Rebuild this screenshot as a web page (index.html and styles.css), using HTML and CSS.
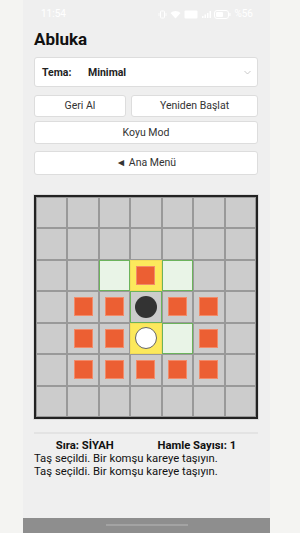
FILE: index.html
```html
<!DOCTYPE html>
<html lang="tr">
  <head>
    <meta charset="UTF-8" />
    <meta name="viewport" content="width=device-width, initial-scale=1.0" />
    <title>Abluka</title>
    <link rel="stylesheet" href="styles.css">
  </head>
  <body>
    <div class="phone">
      <div class="status">
        <span class="time">11:54</span>
        <div class="status-icons">
          <svg width="9" height="9" viewBox="0 0 9 9"><rect x="2.5" y="1" width="4" height="7" rx="0.8" fill="none" stroke="#fff" stroke-width="1"/><path d="M1 3v3M8 3v3" stroke="#fff" stroke-width="0.8"/></svg>
          <svg width="11" height="9" viewBox="0 0 11 9"><path d="M0.5 3a7 7 0 0 1 10 0L5.5 8.5z" fill="#fff"/></svg>
          <svg width="14" height="9" viewBox="0 0 14 9"><rect x="0.5" y="0.5" width="13" height="8" rx="1" fill="#fff"/></svg>
          <svg width="10" height="9" viewBox="0 0 10 9"><path d="M1 8h1.5V6H1zM3.5 8H5V4.5H3.5zM6 8h1.5V3H6zM8.5 8H10V1H8.5z" fill="#fff"/></svg>
          <svg width="17" height="9" viewBox="0 0 17 9"><rect x="0.5" y="0.5" width="14" height="8" rx="2.5" fill="none" stroke="#fff" stroke-width="1"/><rect x="2" y="2" width="7" height="5" rx="1" fill="#fff"/><rect x="15.3" y="3" width="1.2" height="3" fill="#fff"/></svg>
          <span>%56</span>
        </div>
      </div>

      <h1 class="title">Abluka</h1>

      <div class="select">
        <span class="select-label">Tema:</span>
        <span class="select-value">Minimal</span>
        <svg class="chevron" width="7" height="5" viewBox="0 0 7 5"><path d="M0.5 1l3 3 3-3" fill="none" stroke="#bbb" stroke-width="0.8"/></svg>
      </div>

      <div class="btn-row">
        <button class="btn">Geri Al</button>
        <button class="btn">Yeniden Başlat</button>
      </div>
      <button class="btn btn-wide">Koyu Mod</button>
      <button class="btn btn-wide btn-menu">◄ Ana Menü</button>

      <div class="board" id="board"></div>

      <div class="info">
        <div class="info-top">
          <span>Sıra: SİYAH</span>
          <span>Hamle Sayısı: 1</span>
        </div>
        <p>Taş seçildi. Bir komşu kareye taşıyın.</p>
        <p>Taş seçildi. Bir komşu kareye taşıyın.</p>
      </div>

      <div class="navbar"><span class="handle"></span></div>
    </div>

    <script>
      // . boş, x blok, g geçerli, y seçili+blok, B siyah, w beyaz(seçili)
      const rows = [
        ".......",
        ".......",
        "..gyg..",
        ".xxBxx.",
        ".xxwgx.",
        ".xxxxx.",
        ".......",
      ];
      const board = document.getElementById("board");
      rows.forEach((row) => {
        for (const ch of row) {
          const cell = document.createElement("div");
          cell.className = "cell";
          if (ch === "g") cell.classList.add("valid");
          if (ch === "y" || ch === "w") cell.classList.add("selected");
          if (ch === "B") cell.classList.add("edge");
          if (ch === "x" || ch === "y") {
            const b = document.createElement("div");
            b.className = "block";
            cell.appendChild(b);
          }
          if (ch === "B" || ch === "w") {
            const p = document.createElement("div");
            p.className = ch === "B" ? "piece black" : "piece white";
            cell.appendChild(p);
          }
          board.appendChild(cell);
        }
      });
    </script>
  </body>
</html>
```

FILE: styles.css
```css
* {
  box-sizing: border-box;
}

body {
  margin: 0;
  background: #f4f4f2;
  font-family: Roboto, "Noto Sans", sans-serif;
  color: #222;
}

.phone {
  width: 247px;
  height: 533px;
  margin-left: 23px;
  background: #efefef;
  display: flex;
  flex-direction: column;
  padding: 0 12px 0 11px;
  position: relative;
}

.status {
  height: 28px;
  display: flex;
  align-items: center;
  justify-content: space-between;
  padding: 0 5px 0 7px;
  color: #fff;
  font-size: 10px;
  line-height: 12px;
}

.status-icons {
  display: flex;
  align-items: center;
  gap: 3px;
}

.title {
  margin: 0 0 7px;
  font-size: 17px;
  font-weight: 700;
  line-height: 22px;
  color: #111;
}

.select {
  height: 30px;
  background: #fff;
  border: 1px solid #ddd;
  border-radius: 3px;
  display: flex;
  align-items: center;
  padding: 0 6px 0 7px;
  font-size: 10.5px;
  font-weight: 700;
}

.select-label {
  width: 46px;
}

.select-value {
  flex: 1;
}

.btn-row {
  display: grid;
  grid-template-columns: 92px 1fr;
  gap: 5px;
  margin-top: 8px;
}

.btn {
  height: 22px;
  background: #fff;
  border: 1px solid #ddd;
  border-radius: 3px;
  font-family: Roboto, "Noto Sans", sans-serif;
  font-size: 10.5px;
  line-height: 12px;
  color: #333;
  padding: 0;
}

.btn-wide {
  width: 100%;
  height: 23px;
  margin-top: 4px;
}

.btn-menu {
  height: 24px;
  margin-top: 7px;
}

.board {
  margin-top: 20px;
  width: 224px;
  height: 224px;
  border: 2px solid #222;
  box-shadow: 0 0 0 1px #ddd;
  display: grid;
  grid-template-columns: repeat(7, 1fr);
  grid-template-rows: repeat(7, 1fr);
}

.cell {
  background: #cccccc;
  border: 1px solid #999;
  display: flex;
  align-items: center;
  justify-content: center;
}

.cell.valid {
  background: #e9f4e7;
  border-color: #6cb35c;
}

.cell.selected {
  background: #fce95c;
  border-color: #f3dd57;
}

.cell.edge {
  border-color: #6cb35c;
}

.block {
  width: 19px;
  height: 19px;
  background: #ec5f33;
  border: 1px solid #f28b69;
}

.piece {
  width: 22px;
  height: 22px;
  border-radius: 50%;
}

.piece.black {
  background: #333;
}

.piece.white {
  background: #fff;
  border: 1px solid #666;
}

.info {
  margin-top: 13px;
  border-top: 2px solid #e3e3e3;
  padding-top: 5px;
  font-size: 11.3px;
  line-height: 13px;
  color: #111;
}

.info-top {
  display: flex;
  justify-content: space-around;
  font-weight: 700;
}

.info p {
  margin: 0;
}

.navbar {
  position: absolute;
  left: 0;
  right: 0;
  bottom: 0;
  height: 15px;
  background: #8e8e8e;
  display: flex;
  justify-content: center;
  padding-top: 6px;
}

.handle {
  width: 82px;
  height: 2px;
  background: #a3a3a3;
}
```
